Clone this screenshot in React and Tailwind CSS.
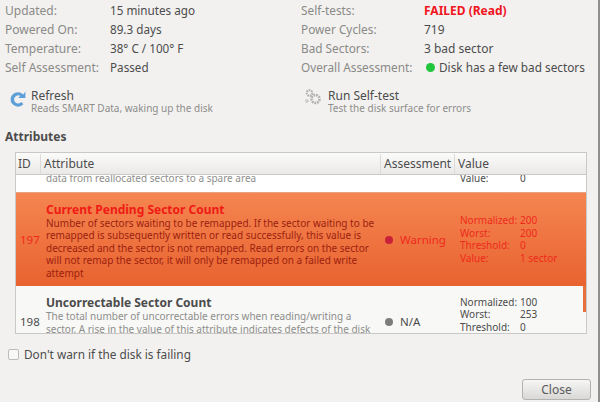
const font = { fontFamily: '"Noto Sans", sans-serif' }

const facts = [
  ['Updated:', '15 minutes ago', 'Self-tests:', 'FAILED (Read)'],
  ['Powered On:', '89.3 days', 'Power Cycles:', '719'],
  ['Temperature:', '38° C / 100° F', 'Bad Sectors:', '3 bad sector'],
  ['Self Assessment:', 'Passed', 'Overall Assessment:', 'Disk has a few bad sectors'],
]

function RefreshIcon() {
  return (
    <svg width="16" height="16" viewBox="0 0 16 16">
      <path d="M13.2 3.4A7.4 7.4 0 0 0 .6 8.6a7.4 7.4 0 0 0 12.8 4.6l-1.9-2.2A4.3 4.3 0 0 1 4 8.2a4.3 4.3 0 0 1 6.2-3.4L8.4 7h7V.6z" fill="#5f9fd8" />
    </svg>
  )
}

function GearsIcon() {
  return (
    <svg width="18" height="18" viewBox="0 0 18 18" fill="none" stroke="#b4b3b0">
      <circle cx="4.5" cy="4" r="2.8" strokeWidth="2.2" strokeDasharray="1.6 0.8" />
      <circle cx="10.5" cy="10" r="4" strokeWidth="2.6" strokeDasharray="1.9 0.8" />
      <circle cx="1.8" cy="12" r="1.2" strokeWidth="1.4" strokeDasharray="1 0.6" />
    </svg>
  )
}

function ValueRow({ label, value, red }) {
  return (
    <div className={`flex h-[12.5px] items-center whitespace-nowrap ${red ? 'text-[#ee2a1c]' : 'text-[#4c4c4c]'}`}>
      <span className="w-[60px]">{label}</span>
      <span>{value}</span>
    </div>
  )
}

function Dot({ color }) {
  return <span className={`h-[8px] w-[8px] shrink-0 rounded-full ${color}`} />
}

export default function App() {
  return (
    <div className="relative flex h-[402px] w-[600px] flex-col overflow-hidden bg-[#f2f1f0] text-[12px] text-[#4c4c4c]" style={font}>
      <div className="absolute top-0 right-0 bottom-0 w-[2px] bg-[#8f8f8c]" />

      <div className="grid grid-cols-[105px_191px_123px_1fr] pt-[1px] pl-[5px] leading-[19px]">
        {facts.map(([a, b, c, d]) => (
          <div key={a} className="contents">
            <span className="text-[#8a8a87]">{a}</span>
            <span className="text-[11.7px]">{b}</span>
            <span className="text-[11.8px] text-[#8a8a87]">{c}</span>
            {c === 'Self-tests:' ? (
              <span className="font-bold text-[#f0141e]">{d}</span>
            ) : c === 'Overall Assessment:' ? (
              <span className="ml-[2px] flex items-center gap-[4px] text-[11.8px] whitespace-nowrap">
                <span className="h-[9px] w-[9px] rounded-full bg-[#22c63c]" />
                {d}
              </span>
            ) : (
              <span>{d}</span>
            )}
          </div>
        ))}
      </div>

      <div className="mt-[12px] flex h-[30px] leading-[13px]">
        <div className="flex w-[301px] pl-[10px]">
          <div className="pt-[2px]"><RefreshIcon /></div>
          <div className="ml-[5px]">
            <div className="text-[12px]">Refresh</div>
            <div className="text-[10px] text-[#8e8e8b]">Reads SMART Data, waking up the disk</div>
          </div>
        </div>
        <div className="flex pl-[4px]">
          <div><GearsIcon /></div>
          <div className="ml-[5px]">
            <div className="text-[12px]">Run Self-test</div>
            <div className="text-[10px] text-[#8e8e8b]">Test the disk surface for errors</div>
          </div>
        </div>
      </div>

      <div className="mt-[10px] pl-[5px] text-[12px] leading-[16px] font-bold text-[#4c4c4c]">Attributes</div>

      <div className="mt-[7px] ml-[15px] flex h-[182px] w-[572px] flex-col overflow-hidden border border-[#c9c8c6] bg-white">
        <div className="flex h-[22px] shrink-0 items-center border-b border-[#c9c8c6] bg-gradient-to-b from-[#fbfbfa] to-[#eae9e7] pt-[1px] text-[12px]">
          <div className="flex h-full w-[25px] items-center border-r border-[#dcdbd9] pl-[2px]">ID</div>
          <div className="flex h-full w-[340px] items-center border-r border-[#dcdbd9] pl-[3px]">Attribute</div>
          <div className="flex h-full w-[74px] items-center border-r border-[#dcdbd9] pl-[3px]">Assessment</div>
          <div className="pl-[3px]">Value</div>
        </div>

        <div className="relative min-h-0 flex-1 overflow-hidden">
          <div className="flex h-[17px] items-end overflow-hidden bg-white pb-[7px] text-[10px] leading-[13px] whitespace-nowrap text-[#8e8e8b]">
            <div className="ml-[30px] w-[414px]">data from reallocated sectors to a spare area</div>
            <div className="flex w-[120px] text-[#4c4c4c]">
              <span className="w-[60px]">Value:</span>
              <span>0</span>
            </div>
          </div>

          <div className="flex h-[94px] items-center border-t border-[#e9a184] bg-gradient-to-b from-[#f58550] to-[#e8622f] text-[10px]">
            <div className="w-[29px] pl-[4px] text-[11.5px] text-[#ee2a1c]">197</div>
            <div className="w-[340px] pt-[3px] pl-[1px] whitespace-nowrap text-[#9c1f10]">
              <div className="text-[12px] leading-[14px] font-bold text-[#ef1b14]">Current Pending Sector Count</div>
              <div className="leading-[12.5px]">
                Number of sectors waiting to be remapped. If the sector waiting to be<br />
                remapped is subsequently written or read successfully, this value is<br />
                decreased and the sector is not remapped. Read errors on the sector<br />
                will not remap the sector, it will only be remapped on a failed write<br />
                attempt
              </div>
            </div>
            <div className="flex w-[75px] items-center gap-[7px] text-[11.5px] text-[#ee2a1c]">
              <Dot color="bg-[#c9213a]" />
              Warning
            </div>
            <div>
              <ValueRow red label="Normalized:" value="200" />
              <ValueRow red label="Worst:" value="200" />
              <ValueRow red label="Threshold:" value="0" />
              <ValueRow red label="Value:" value="1 sector" />
            </div>
          </div>

          <div className="flex h-[48px] items-start bg-[#f8f8f7] text-[10px]">
            <div className="w-[29px] pt-[28px] pl-[4px] text-[11.5px] leading-[16px]">198</div>
            <div className="w-[340px] pt-[10px] pl-[1px] whitespace-nowrap text-[#8e8e8b]">
              <div className="text-[12px] leading-[14px] font-bold text-[#4c4c4c]">Uncorrectable Sector Count</div>
              <div className="leading-[12.5px]">
                The total number of uncorrectable errors when reading/writing a<br />
                sector. A rise in the value of this attribute indicates defects of the disk
              </div>
            </div>
            <div className="flex w-[75px] items-center gap-[7px] pt-[28px] text-[11.5px] leading-[16px]">
              <Dot color="bg-[#7d7d7b]" />
              N/A
            </div>
            <div className="pt-[10px]">
              <ValueRow label="Normalized:" value="100" />
              <ValueRow label="Worst:" value="253" />
              <ValueRow label="Threshold:" value="0" />
            </div>
          </div>

          {/* overlay scrollbar thumb */}
          <div className="absolute top-[111px] right-0 h-[26px] w-[3px] bg-[#e8703c]" />
        </div>
      </div>

      <label className="mt-[13px] ml-[8px] flex items-center gap-[5px] text-[11.8px] leading-[14px]">
        <span className="h-[11px] w-[11px] rounded-[2px] border border-[#bdbcba] bg-[#f8f8f7]" />
        Don't warn if the disk is failing
      </label>

      <div className="mt-[18px] flex justify-end pr-[9px]">
        <button className="h-[21px] w-[69px] rounded-[3px] border border-[#b3b2b0] bg-gradient-to-b from-[#f6f6f5] to-[#d9d8d6] text-[12px] text-[#5a5a5a]">
          Close
        </button>
      </div>
    </div>
  )
}
